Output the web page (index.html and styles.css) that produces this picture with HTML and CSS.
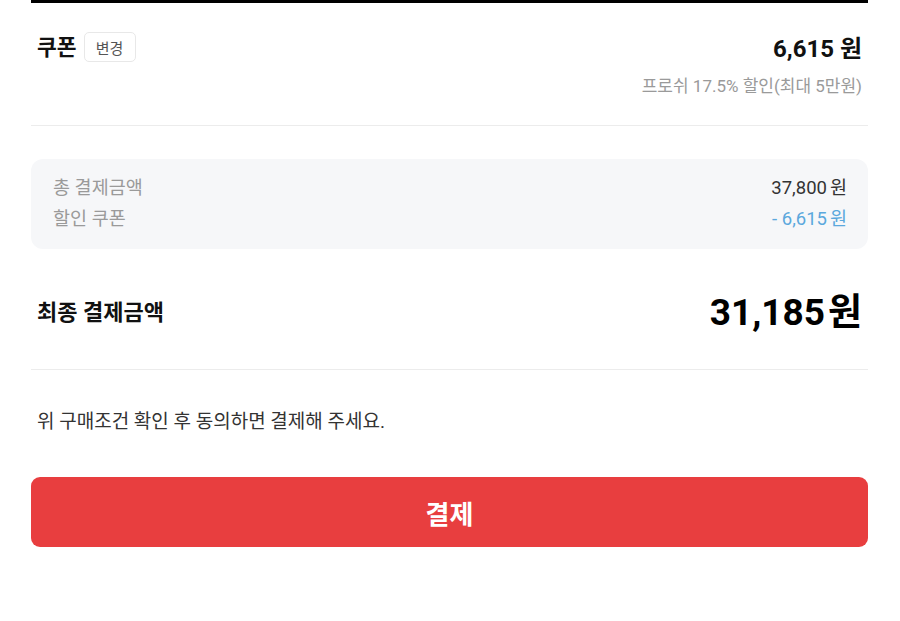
FILE: index.html
```html
<!DOCTYPE html>
<html lang="ko">
<head>
<meta charset="utf-8">
<link rel="stylesheet" href="styles.css">
</head>
<body>
<div class="page">
  <div class="topbar"></div>
  <section class="coupon">
    <div class="coupon-row">
      <div class="coupon-left">
        <span class="title">쿠폰</span>
        <button class="change">변경</button>
      </div>
      <span class="coupon-amount">6,615 원</span>
    </div>
    <div class="coupon-desc">프로쉬 17.5% 할인(최대 5만원)</div>
  </section>
  <div class="summary">
    <div class="sum-row"><span class="label">총 결제금액</span><span class="value">37,800<span class="won">원</span></span></div>
    <div class="sum-row"><span class="label">할인 쿠폰</span><span class="value blue">- 6,615<span class="won">원</span></span></div>
  </div>
  <section class="final">
    <span class="final-label">최종 결제금액</span>
    <span class="final-amount">31,185<span class="won">원</span></span>
  </section>
  <p class="notice">위 구매조건 확인 후 동의하면 결제해 주세요.</p>
  <button class="pay">결제</button>
</div>
</body>
</html>
```

FILE: styles.css
```css
* { box-sizing: border-box; }
html, body { margin: 0; padding: 0; background: #fff; }
body {
  font-family: Roboto, "Noto Sans CJK KR", sans-serif;
  color: #111;
}
.page {
  width: 837px;
  margin-left: 31px;
}
.topbar {
  height: 3px;
  background: #000;
}
.coupon {
  padding: 29px 6px 27px 6px;
  border-bottom: 1px solid #ececec;
}
.coupon-row {
  display: flex;
  justify-content: space-between;
  align-items: center;
  height: 30px;
}
.coupon-left {
  display: flex;
  align-items: center;
  gap: 7px;
}
.title {
  font-size: 21.5px;
  font-weight: 700;
  color: #111;
  line-height: 30px;
  position: relative;
  top: 1px;
}
.change {
  font-family: inherit;
  font-size: 15px;
  color: #555;
  background: #fff;
  border: 1px solid #e8e8e8;
  border-radius: 5px;
  height: 30px;
  width: 52px;
  padding: 0;
}
.coupon-amount {
  font-size: 24px;
  font-weight: 700;
  color: #111;
  line-height: 30px;
  position: relative;
  top: 2px;
}
.coupon-desc {
  text-align: right;
  margin-top: 12px;
  font-size: 17px;
  line-height: 24px;
  color: #9a9a9a;
}
.summary {
  margin-top: 33px;
  background: #f6f7f9;
  border-radius: 12px;
  padding: 14px 21px 20px 22px;
  display: flex;
  flex-direction: column;
  gap: 6px;
}
.sum-row {
  display: flex;
  justify-content: space-between;
  align-items: center;
  height: 25px;
  font-size: 18.5px;
}
.label { color: #9a9a9a; }
.value { color: #333; }
.value.blue { color: #5ba8dd; }
.won { margin-left: 3px; }
.final {
  display: flex;
  justify-content: space-between;
  align-items: center;
  padding: 42px 6px 34px 6px;
  border-bottom: 1px solid #ececec;
}
.final-label {
  font-size: 22px;
  font-weight: 700;
  line-height: 30px;
}
.final-amount {
  font-size: 37px;
  font-weight: 700;
  color: #000;
  line-height: 44px;
}
.notice {
  margin: 38px 0 0 6px;
  font-size: 19px;
  line-height: 28px;
  color: #333;
}
.pay {
  display: block;
  width: 100%;
  height: 70px;
  margin-top: 41px;
  background: #e83e3f;
  color: #fff;
  border: none;
  border-radius: 9px;
  font-family: inherit;
  font-size: 26px;
  font-weight: 700;
}
```
